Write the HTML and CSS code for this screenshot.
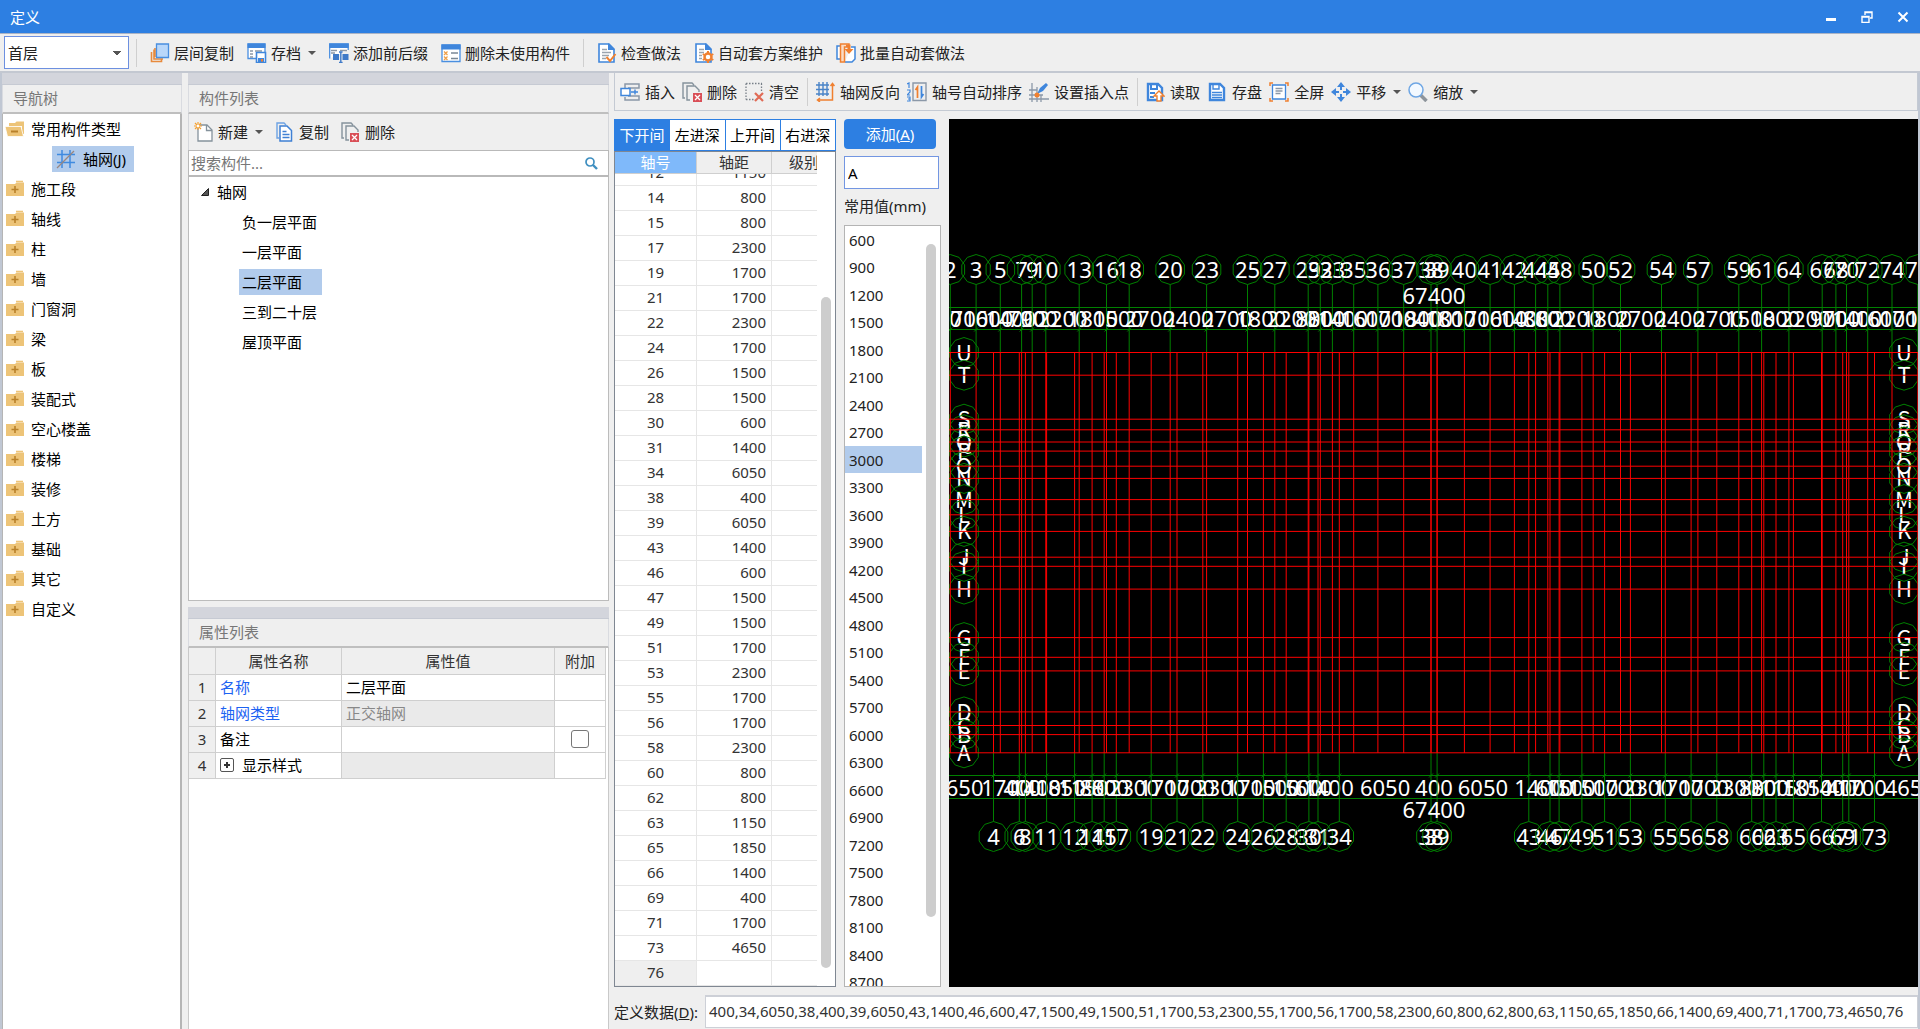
FILE: index.html
```html
<!DOCTYPE html>
<html lang="zh-CN">
<head>
<meta charset="utf-8">
<title>定义</title>
<link rel="stylesheet" href="styles.css">
</head>
<body>
<header class="titlebar">
  <h1>定义</h1>
  <div class="window-controls">
    <button type="button" aria-label="最小化"><svg viewBox="0 0 12 12"><path d="M1 8.500h10" stroke-width="3"/></svg></button>
    <button type="button" aria-label="还原"><svg viewBox="0 0 12 12"><path d="M1 5.500h7v6h-7zM4 4V1h7v6H9M1 6h7M4 1.500h7" stroke-width="1.400"/></svg></button>
    <button type="button" aria-label="关闭"><svg viewBox="0 0 12 12"><path d="M1.500 1.500l9 9M10.500 1.500l-9 9" stroke-width="2"/></svg></button>
  </div>
</header>

<div class="toolbar main-toolbar">
  <select class="floor" aria-label="楼层"><option>首层</option></select>
  <span class="sep"></span>
  <button type="button"><svg class="icon" viewBox="0 0 20 20"><path d="M5 5v9M1.500 9v9.500h10V16M4 6.500v9.500h9" fill="none" stroke="#e88a3c" stroke-width="1.600"/><path d="M6.500 1h12v13.500h-12z" fill="#b9d7fa" stroke="#4a8fe0" stroke-width="1.300"/></svg>层间复制</button>
  <button type="button"><svg class="icon" viewBox="0 0 20 20"><path d="M9 15.500H1V1h17v8" fill="#fff" stroke="#4a8fe0" stroke-width="1.300"/><path d="M.5.500h18v4.500H.5z" fill="#3f86dc"/><path d="M3 8h3M8 8h7M3 11h3M3 14h3" stroke="#8b98a8" stroke-width="1.400"/><path d="M9.500 9.500h9v10h-9z" fill="#fff" stroke="#3f86dc" stroke-width="1.600"/><path d="M11 15h6v4.500h-6z" fill="#3f86dc"/><path d="M14 16h2v2.500h-2z" fill="#f08030"/></svg>存档<i class="caret"></i></button>
  <button type="button"><svg class="icon" viewBox="0 0 20 20"><path d="M.7 15.500V1h18.500v6" fill="#fff" stroke="#4a8fe0" stroke-width="1.300"/><path d="M.3.500h19.400v4.500H.3z" fill="#3f86dc"/><path d="M2 7.500h6M11 7.500h7M2 10h4" stroke="#8b98a8" stroke-width="1.300"/><path d="M4 11h6v6H4zM13.500 11h6v6h-6z" fill="#3f7ac8"/><path d="M11.800 9.500v10M10 9h3.600M10 19.500h3.600" stroke="#3f7ac8" stroke-width="1.400"/></svg>添加前后缀</button>
  <button type="button"><svg class="icon" viewBox="0 0 20 20"><path d="M1 2h18v16.500H1z" fill="#fff" stroke="#4a8fe0" stroke-width="1.300"/><path d="M.4 1.500h19.200v5H.4z" fill="#3f86dc"/><path d="M3 8.500l3.500 3.500M6.500 8.500L3 12M3 13.500L6.500 17M6.500 13.500L3 17" stroke="#f0a04a" stroke-width="1.300"/><path d="M10 10h7M10 15.500h7" stroke="#7a8896" stroke-width="1.300"/></svg>删除未使用构件</button>
  <span class="sep"></span>
  <button type="button"><svg class="icon" viewBox="0 0 20 20"><path d="M2 1h10l5 5v13H2z" fill="#fff" stroke="#3f86dc" stroke-width="1.600"/><path d="M11 0l7 7h-7z" fill="#3f86dc"/><path d="M5 6.500h5M5 9.500h9M5 12.500h7M5 15.500h4" stroke="#9aa4af" stroke-width="1.400"/><path d="M9.500 14l3.500 4 5.500-7" fill="none" stroke="#f08030" stroke-width="2"/></svg>检查做法</button>
  <button type="button"><svg class="icon" viewBox="0 0 20 20"><path d="M2 1h10l5 5v13H2z" fill="#fff" stroke="#3f86dc" stroke-width="1.600"/><path d="M11 0l7 7h-7z" fill="#3f86dc"/><path d="M5 6.500h5M5 9.500h5M5 12.500h3M5 15.500h3" stroke="#9aa4af" stroke-width="1.400"/><circle cx="14" cy="14" r="3.500" fill="#fff" stroke="#f08030" stroke-width="2.500"/><path d="M14 8v2M14 18v2M8.800 11l1.800 1M17.500 16l1.800 1M8.800 17l1.800-1M17.500 12l1.800-1" stroke="#f08030" stroke-width="2"/></svg>自动套方案维护</button>
  <button type="button"><svg class="icon" viewBox="0 0 20 20"><path d="M4 3H1v13h3M15 4h4v12l-3 3H9" fill="#fff" stroke="#3f86dc" stroke-width="1.500"/><path d="M4.500 1H13v3H8.500v15h-4z" fill="#fbdcc4" stroke="#f08030" stroke-width="1.500"/><path d="M10 1.500h4.500V6h3l-4.500 5-4.500-5h3V4H10z" fill="#f08030"/></svg>批量自动套做法</button>
</div>

<main class="workspace">
  <nav class="panel nav-panel">
    <div class="grip"></div>
    <h2>导航树</h2>
    <ul class="nav-tree" id="nav">
      <li><a href="#"><svg class="icon" viewBox="0 0 20 20"><path d="M4 8V4h6l1.500-1.500H19V15h-2V7z" fill="#edc478"/><path d="M0 7.500h16l2.500 10h-16z" fill="#edc478" stroke="#fff" stroke-width="0.800"/><path d="M6 12.500h7" stroke="#b8812a" stroke-width="2"/></svg>常用构件类型</a></li>
      <li class="child"><a href="#" class="selected"><svg class="icon" viewBox="0 0 20 20"><path d="M6 1v18M14 1v18M1 5.500h18M1 13.500h18" stroke="#3f8ae0" stroke-width="1.500"/><path d="M1 19L18 2" stroke="#9a8680" stroke-width="1.300"/></svg>轴网(J)</a></li>
    </ul>
  </nav>

  <div class="middle">
    <section class="panel list-panel">
      <div class="grip"></div>
      <h2>构件列表</h2>
      <div class="toolbar list-toolbar">
        <button type="button"><svg class="icon" viewBox="0 0 20 20"><path d="M4 3h9l5 5v11H4z" fill="#fff" stroke="#85929c" stroke-width="1.300"/><path d="M12.500 3v5.500H18" fill="none" stroke="#85929c" stroke-width="1.300"/><path d="M0 4h8M4 0v8M1 1l6 6M7 1L1 7" stroke="#f5a030" stroke-width="1.200"/><circle cx="4" cy="4" r="1.400" fill="#fff"/></svg>新建<i class="caret"></i></button>
        <button type="button"><svg class="icon" viewBox="0 0 20 20"><path d="M4 16H2V1h7l2 2" fill="none" stroke="#6da3e4" stroke-width="1.400"/><path d="M5 4h7l4.500 4.500V19H5z" fill="#fff" stroke="#3f80d4" stroke-width="1.500"/><path d="M7.500 9.500h4M7.500 12.500h7M7.500 15.500h7" stroke="#3f80d4" stroke-width="1.500"/></svg>复制</button>
        <button type="button"><svg class="icon" viewBox="0 0 20 20"><path d="M3 16H1V1h9l2 2M8 18H5V4h8l4 4v2" fill="none" stroke="#85929c" stroke-width="1.400"/><path d="M9 11h9v9H9z" fill="#d94f57"/><path d="M11 13l5 5M16 13l-5 5" stroke="#fff" stroke-width="1.300"/></svg>删除</button>
      </div>
      <div class="search"><input type="text" aria-label="搜索构件" placeholder="搜索构件..."><svg viewBox="0 0 14 14"><circle cx="6" cy="6" r="4" fill="none" stroke="#3f8fc0" stroke-width="1.700"/><path d="M9 9l4 4" stroke="#3f8fc0" stroke-width="2.400"/></svg></div>
      <ul class="comp-tree">
        <li class="root"><svg viewBox="0 0 8 8"><path d="M7.500.500v7h-7z" fill="#555" stroke="#222"/></svg>轴网</li>
        <li><a href="#">负一层平面</a></li>
        <li><a href="#">一层平面</a></li>
        <li><a href="#" class="selected">二层平面</a></li>
        <li><a href="#">三到二十层</a></li>
        <li><a href="#">屋顶平面</a></li>
      </ul>
    </section>
    <section class="panel prop-panel">
      <div class="grip"></div>
      <h2>属性列表</h2>
      <div class="prop-body">
        <table class="props">
          <thead><tr><th class="num"></th><th class="name">属性名称</th><th>属性值</th><th class="extra">附加</th></tr></thead>
          <tbody>
            <tr><th>1</th><td class="link">名称</td><td>二层平面</td><td></td></tr>
            <tr><th>2</th><td class="link">轴网类型</td><td class="locked">正交轴网</td><td></td></tr>
            <tr><th>3</th><td><label for="note-extra">备注</label></td><td></td><td class="tick"><input type="checkbox" id="note-extra"></td></tr>
            <tr><th>4</th><td><span class="expandable"><button type="button" class="expand" aria-label="展开"></button>显示样式</span></td><td class="locked"></td><td></td></tr>
          </tbody>
        </table>
      </div>
    </section>
  </div>

  <section class="editor">
    <div class="toolbar axis-toolbar">
      <button type="button"><svg class="icon" viewBox="0 0 20 20"><path d="M5 6V2h14v4H8M5 15v3h14v-4H8" fill="none" stroke="#8b98a8" stroke-width="1.500"/><path d="M1 6.500h9v7H1z" fill="#fff" stroke="#3f86dc" stroke-width="1.500"/><path d="M11 10h7M15 7.500v5" stroke="#3f86dc" stroke-width="1.400"/></svg>插入</button>
      <button type="button"><svg class="icon" viewBox="0 0 20 20"><path d="M3 16H1V1h9l2 2M8 18H5V4h8l4 4v2" fill="none" stroke="#85929c" stroke-width="1.400"/><path d="M11 11h9v9h-9z" fill="#d94f57"/><path d="M13 13l5 5M18 13l-5 5" stroke="#fff" stroke-width="1.300"/></svg>删除</button>
      <button type="button"><svg class="icon" viewBox="0 0 20 20"><path d="M2 1.500h16M2 17.500h8M2 1.500v16M17.500 1.500V9" fill="none" stroke="#777f88" stroke-width="1.300" stroke-dasharray="1.500 1.500"/><path d="M11 11l8 8M19 11l-8 8" stroke="#e06a55" stroke-width="2.200"/></svg>清空</button>
      <span class="sep"></span>
      <button type="button"><svg class="icon" viewBox="0 0 20 20"><path d="M4 0v14M8 0v14M12 0v14M1 3h13M1 7.500h13M1 12h13" stroke="#4a84c8" stroke-width="1.400"/><path d="M17.500 2v16H3M15.500 4l2-2.500 2 2.500M5 16l-2.500 2L5 20" fill="none" stroke="#f08030" stroke-width="1.500"/></svg>轴网反向</button>
      <button type="button"><svg class="icon" viewBox="0 0 20 20"><path d="M0 2l2-1v5M0 8h3v2L0 13h3M0 15h3v4H0M1 17h2" fill="none" stroke="#3f86dc" stroke-width="1.200"/><path d="M6 1h13v17.500H6z" fill="none" stroke="#8b98a8" stroke-width="1.400"/><path d="M10.500 16V5l-2 3" fill="none" stroke="#f08030" stroke-width="1.700"/><path d="M14.500 4v11l2-3" fill="none" stroke="#3f86dc" stroke-width="1.700"/></svg>轴号自动排序</button>
      <button type="button"><svg class="icon" viewBox="0 0 20 20"><path d="M3 1v19M8 5v15M0 8h8M0 17h20M12 13v7M0 13h14" stroke="#8b98a8" stroke-width="1.300"/><path d="M8 12l3-6 6-5 2 2-5 6z" fill="#3f86dc"/><circle cx="8" cy="13" r="2.500" fill="#f08030"/></svg>设置插入点</button>
      <span class="sep"></span>
      <button type="button"><svg class="icon" viewBox="0 0 20 20"><path d="M3 2h10l4 4v12H3z" fill="#fff" stroke="#3f86dc" stroke-width="2.400"/><path d="M6 2v5h6V2M5 11h5M5 15h4" fill="none" stroke="#3f86dc" stroke-width="2"/><path d="M14 9l5 5h-3v5h-4v-5h-3z" fill="#fff" stroke="#f08030" stroke-width="1.400"/></svg>读取</button>
      <button type="button"><svg class="icon" viewBox="0 0 20 20"><path d="M3 2h10l4 4v12H3z" fill="#fff" stroke="#3f86dc" stroke-width="2.400"/><path d="M6 2v5h6V2M5 10.500h10M5 13h10M5 15.500h10" fill="none" stroke="#3f86dc" stroke-width="1.400"/></svg>存盘</button>
      <button type="button"><svg class="icon" viewBox="0 0 20 20"><path d="M1 4V1h3M16 1h3v3M19 16v3h-3M4 19H1v-3" fill="none" stroke="#f08030" stroke-width="1.500"/><path d="M3.500 3h13v14h-13z" fill="#fff" stroke="#3f86dc" stroke-width="1.300"/><path d="M6.500 6.500h7M6.500 9h7M6.500 11.500h5" stroke="#8b98a8" stroke-width="1.300"/></svg>全屏</button>
      <button type="button"><svg class="icon" viewBox="0 0 20 20"><path d="M10 0l4 5h-3v3H9V5H6zM10 20l4-5h-3v-3H9v3H6zM0 10l5-4v3h3v2H5v3zM20 10l-5-4v3h-3v2h3v3z" fill="#3f86dc"/></svg>平移<i class="caret"></i></button>
      <button type="button"><svg class="icon" viewBox="0 0 20 20"><path d="M12.500 13l6 6" stroke="#8d949b" stroke-width="3.500"/><circle cx="8" cy="8" r="7" fill="#f3f9ff" stroke="#6ea6e4" stroke-width="1.500"/></svg>缩放<i class="caret"></i></button>
    </div>

    <div class="panes">
      <div class="axis-pane">
        <div class="tabs" role="tablist">
          <button type="button" role="tab" aria-selected="true">下开间</button>
          <button type="button" role="tab" aria-selected="false">左进深</button>
          <button type="button" role="tab" aria-selected="false">上开间</button>
          <button type="button" role="tab" aria-selected="false">右进深</button>
        </div>
        <div class="axis-box">
          <div class="axis-scroll" id="axis-scroll">
            <table class="axes">
              <thead><tr><th class="no">轴号</th><th class="dist">轴距</th><th class="level">级别</th></tr></thead>
              <tbody id="axis-rows"></tbody>
            </table>
          </div>
          <div class="track"><div class="thumb axis-thumb"></div></div>
        </div>
      </div>

      <div class="value-pane">
        <button type="button" class="add">添加(<u>A</u>)</button>
        <input type="text" class="value" aria-label="值" value="A" id="value">
        <h3>常用值(mm)</h3>
        <div class="value-box">
          <ul id="values"></ul>
          <div class="track"><div class="thumb value-thumb"></div></div>
        </div>
      </div>

      <div class="canvas">
        <svg id="plan" viewBox="0 0 969 869" preserveAspectRatio="xMidYMid slice" role="img" aria-label="轴网"></svg>
      </div>
    </div>

    <div class="data-bar">
      <label for="data">定义数据(<u>D</u>):</label>
      <input type="text" id="data" value="400,34,6050,38,400,39,6050,43,1400,46,600,47,1500,49,1500,51,1700,53,2300,55,1700,56,1700,58,2300,60,800,62,800,63,1150,65,1850,66,1400,69,400,71,1700,73,4650,76">
    </div>
  </section>
</main>
<script src="script.js"></script>
</body>
</html>
```
FILE: styles.css
```css
* { box-sizing: border-box; }

body {
  margin: 0;
  height: 100vh;
  display: flex;
  flex-direction: column;
  overflow: hidden;
  background: #efefef;
  color: #000;
  font: 15px/20px "Noto Sans", "Noto Sans CJK SC", sans-serif;
}

h1, h2, h3, ul { margin: 0; padding: 0; font-size: 15px; font-weight: 400; }
ul { list-style: none; }
a { color: inherit; text-decoration: none; }
button, input, select { font: inherit; color: inherit; }
button { margin: 0; padding: 0; border: 0; background: none; white-space: nowrap; }

.titlebar {
  display: flex;
  flex: none;
  align-items: center;
  justify-content: space-between;
  height: 34px;
  padding: 0 5px 0 10px;
  border-bottom: 1px solid #aab4c6;
  background: #2d7fe2;
  color: #fff;
}
.window-controls { display: flex; gap: 12px; }
.window-controls button { width: 24px; height: 24px; display: grid; place-items: center; }
.window-controls svg { width: 12px; height: 12px; fill: none; stroke: #fff; }

.toolbar { display: flex; flex: none; align-items: center; color: #222; overflow: hidden; }
.toolbar button { display: flex; flex: none; align-items: center; gap: 4px; }
.icon { width: 20px; height: 20px; flex: none; }
.caret {
  margin-left: 3px;
  border: 4px solid transparent;
  border-top-color: #555;
  border-bottom: 0;
}
.sep { width: 1px; height: 28px; flex: none; background: #cfcfcf; }

.main-toolbar {
  gap: 13px;
  height: 39px;
  padding: 0 4px;
  border-bottom: 2px solid #c3c8d1;
}
.floor {
  width: 125px;
  height: 33px;
  margin-right: -6px;
  padding: 0 3px;
  border: 1px solid #6d90e0;
  border-radius: 0;
  appearance: none;
  background:
    linear-gradient(45deg, transparent 50%, #555 50%) right 11px center / 4px 4px no-repeat,
    linear-gradient(-45deg, transparent 50%, #555 50%) right 7px center / 4px 4px no-repeat,
    #fff;
}

.workspace {
  display: grid;
  grid-template-columns: 180px 432px minmax(0, 1fr);
  grid-template-rows: minmax(0, 1fr);
  flex: 1;
  min-height: 0;
  border: solid #c0c7d3;
  border-width: 0 2px;
}

.panel { display: flex; flex-direction: column; min-height: 0; }
.grip { height: 12px; flex: none; background: #d3d5dc; border-bottom: 1px solid #c6cad3; }
.panel h2 {
  height: 29px;
  flex: none;
  padding: 3px 10px;
  border: 1px solid #d9dbe0;
  border-width: 0 1px 2px;
  border-bottom-color: #bfbfbf;
  color: #777;
}

.nav-tree {
  flex: 1;
  min-height: 0;
  overflow: hidden;
  border: solid #b5b5b5;
  border-width: 0 2px 0 1px;
  background: #fff;
}
.nav-tree li { display: flex; align-items: center; height: 30px; padding-left: 2px; }
.nav-tree a { display: flex; align-items: center; gap: 6px; height: 26px; }
.nav-tree .child { padding-left: 49px; }
.nav-tree .child a { gap: 7px; padding: 0 8px 0 4px; }
.selected { background: #b1cbec; }

.middle { display: flex; flex-direction: column; gap: 6px; min-height: 0; padding: 0 5px 0 6px; }
.list-panel { flex: 5; }
.prop-panel { flex: 4; }
.list-toolbar { gap: 12px; height: 36px; padding-left: 5px; border: 1px solid #d4d6da; border-width: 0 1px; }

.search {
  display: flex;
  flex: none;
  align-items: center;
  height: 27px;
  padding: 0 10px 0 2px;
  border: 1px solid #b9b9b9;
  border-bottom-width: 2px;
  background: #fff;
}
.search input { flex: 1; min-width: 0; padding: 0; border: 0; outline: 0; background: none; }
.search input::placeholder { color: #777; }
.search svg { width: 14px; height: 14px; }

.comp-tree {
  flex: 1;
  min-height: 0;
  overflow: hidden;
  border: solid #bcbcbc;
  border-width: 0 1px 1px;
  background: #fff;
}
.comp-tree li { display: flex; align-items: center; height: 30px; padding-left: 50px; }
.comp-tree .root { gap: 8px; padding-left: 12px; }
.comp-tree svg { width: 8px; height: 8px; }
.comp-tree a { padding: 3px; }
.comp-tree .selected { padding-right: 20px; }

.prop-body {
  flex: 1;
  min-height: 0;
  padding-right: 2px;
  border: solid #c9c9c9;
  border-width: 0 1px;
  background: #fff;
}
.props { width: 100%; table-layout: fixed; border-collapse: separate; border-spacing: 0; }
.props th, .props td {
  height: 26px;
  padding: 0 4px;
  border: solid #cfcfcf;
  border-width: 0 1px 1px 0;
  text-align: left;
}
.props th { padding: 0; background: #efefef; color: #333; font-weight: 400; text-align: center; }
.props thead th { height: 27px; }
.props .num { width: 27px; }
.props .name { width: 126px; }
.props .extra { width: 51px; }
.props .link { color: #1c62f2; }
.props .locked { background: #eaeaea; color: #888; }
.props .tick { padding: 0; text-align: center; }
.tick input {
  display: block;
  width: 18px;
  height: 18px;
  margin: 0 auto;
  border: 1px solid #777;
  border-radius: 3px;
  appearance: none;
  background: #fff;
}
.expandable { display: flex; align-items: center; gap: 8px; }
.expand {
  width: 14px;
  height: 14px;
  border: 1px solid #555;
  border-radius: 2px;
  background:
    linear-gradient(#333, #333) center / 6px 2px no-repeat,
    linear-gradient(#333, #333) center / 2px 6px no-repeat;
}

.editor { display: flex; flex-direction: column; min-width: 0; min-height: 0; }
.axis-toolbar {
  gap: 7px;
  height: 38px;
  padding-left: 5px;
  border: 1px solid #c4cad3;
  border-top: 0;
}
.axis-toolbar button { gap: 5px; }
.axis-toolbar .caret { margin-left: 2px; }
.axis-toolbar .sep { margin-left: 1px; }

.panes { display: flex; flex: 1; gap: 8px; min-height: 0; margin: 8px 0; }
.axis-pane { display: flex; flex-direction: column; width: 222px; flex: none; }
.tabs { display: flex; height: 32px; flex: none; border: 1px solid #2d7fe2; }
.tabs button { flex: 1; border-left: 1px solid #2d7fe2; background: #fff; color: #000; }
.tabs button:first-child { border-left: 0; }
.tabs [aria-selected="true"] { background: #2d7fe2; color: #fff; }

.axis-box {
  display: flex;
  flex: 1;
  min-height: 0;
  border: 1px solid #7f8792;
  background: #fff;
}
.axis-scroll { flex: 1; min-width: 0; overflow: hidden; }
.track { position: relative; width: 18px; flex: none; }
.thumb { position: absolute; border-radius: 5px; background: #cdcdcd; }
.axis-thumb { top: 145px; right: 4px; bottom: 18px; width: 10px; }
.axes { width: 100%; table-layout: fixed; border-collapse: separate; border-spacing: 0; }
.axes th {
  position: sticky;
  top: 0;
  height: 22px;
  padding: 0;
  border: solid #cfcfcf;
  border-width: 0 1px 1px 0;
  background: #efefef;
  color: #333;
  font-weight: 400;
  line-height: 21px;
}
.axes .no { width: 82px; background: #7fb9fa; color: #fff; }
.axes .dist { width: 75px; }
.axes .level { padding-left: 17px; overflow: hidden; white-space: nowrap; text-align: left; border-right: 0; }
.axes td {
  height: 25px;
  padding: 0 5px 2px;
  border: solid #e6e6e6;
  border-width: 0 1px 1px 0;
  color: #333;
  text-align: right;
}
.axes td:first-child { text-align: center; }
.axes td:last-child { border-right: 0; }
.axes tr:last-child td:first-child { background: #efefef; }

.value-pane { display: flex; flex-direction: column; align-items: flex-start; width: 97px; flex: none; }
.add { width: 92px; height: 30px; flex: none; border-radius: 4px; background: #2d7fe2; color: #fff; }
.value {
  width: 95px;
  height: 33px;
  flex: none;
  margin: 7px 0;
  padding: 0 3px;
  border: 1px solid #7396e2;
  outline: 0;
  background: #fff;
}
.value-pane h3 { height: 29px; color: #222; white-space: nowrap; }
.value-box {
  display: flex;
  flex: 1;
  align-self: stretch;
  min-height: 0;
  border: 1px solid #b4b4b4;
  background: #fff;
}
.value-box ul { flex: 1; overflow: hidden; }
.value-box li { height: 27px; padding: 4px; color: #222; }
.value-box li:nth-child(even) { height: 28px; }
.value-thumb { top: 18px; right: 4px; bottom: 69px; width: 10px; }

.canvas { flex: 1; min-width: 0; background: #000; }
.canvas svg { display: block; width: 100%; height: 100%; }
.grid-line { fill: none; stroke: #f00; }
.lead { fill: none; stroke: #008000; }
.plan-text { fill: #fff; font-size: 22px; text-anchor: middle; }
.plan-letter { font-family: "Noto Sans CJK SC", sans-serif; }

.data-bar { display: flex; flex: none; align-items: center; gap: 7px; height: 33px; margin-bottom: 1px; }
.data-bar label { flex: none; color: #222; }
.data-bar input {
  flex: 1;
  min-width: 0;
  height: 33px;
  padding: 0 3px 2px;
  border: 1px solid #cdd0d7;
  border-top-width: 2px;
  outline: 0;
  background: #fff;
  color: #333;
}
```
FILE: script.js
```js
// Navigation tree
const folder = '<svg class="icon" viewBox="0 0 20 20"><path d="M11 2.500h7" stroke="#edc478" stroke-width="1.600"/><path d="M1 5h9l1.500-1.500H19V17H1z" fill="#edc478"/><path d="M6.500 10.500h7M10 7v7" stroke="#b8812a" stroke-width="1.600"/></svg>';
const nav = document.getElementById('nav');
['施工段', '轴线', '柱', '墙', '门窗洞', '梁', '板', '装配式', '空心楼盖', '楼梯', '装修', '土方', '基础', '其它', '自定义'].forEach(name => {
  nav.insertAdjacentHTML('beforeend', `<li><a href="#">${folder}${name}</a></li>`);
});

// Axes as [name, distance to the next axis in mm]
const bottomAxes = [[1, 4650], [4, 1700], [6, 400], [8, 1400], [11, 1850], [12, 1150], [14, 800], [15, 800], [17, 2300], [19, 1700], [21, 1700], [22, 2300], [24, 1700], [26, 1500], [28, 1500], [30, 600], [31, 1400], [34, 6050], [38, 400], [39, 6050], [43, 1400], [46, 600], [47, 1500], [49, 1500], [51, 1700], [53, 2300], [55, 1700], [56, 1700], [58, 2300], [60, 800], [62, 800], [63, 1150], [65, 1850], [66, 1400], [69, 400], [71, 1700], [73, 4650], [76, '']];
const topAxes = [[1, 1800], [2, 1700], [3, 1600], [5, 1400], [7, 700], [9, 900], [10, 2200], [13, 1800], [16, 1500], [18, 2700], [20, 2400], [23, 2700], [25, 1800], [27, 2200], [29, 800], [32, 800], [33, 1400], [35, 1600], [36, 1700], [37, 1800], [38, 400], [39, 1800], [40, 1700], [41, 1600], [42, 1400], [44, 800], [45, 800], [48, 2200], [50, 1800], [52, 2700], [54, 2400], [57, 2700], [59, 1500], [61, 1800], [64, 2200], [67, 900], [68, 700], [70, 1400], [72, 1600], [74, 1700], [75, 1800], [76, '']];
const sideAxes = [['U', 1500], ['T', 2900], ['S', 700], ['R', 800], ['Q', 600], ['P', 1000], ['O', 800], ['N', 1400], ['M', 1000], ['L', 1100], ['K', 1700], ['J', 600], ['I', 1500], ['H', 3200], ['G', 1300], ['F', 900], ['E', 2700], ['D', 900], ['C', 600], ['B', 1200], ['A', '']];

document.getElementById('axis-rows').innerHTML = bottomAxes
  .map(([name, d]) => `<tr><td>${name}</td><td>${d}</td><td></td></tr>`).join('');
const scroller = document.getElementById('axis-scroll');
scroller.scrollTop = scroller.scrollHeight;

// Common spacings
let items = '';
for (let v = 600; v <= 9000; v += 300) {
  items += `<li${v === 3000 ? ' class="selected"' : ''}>${v}</li>`;
}
document.getElementById('values').innerHTML = items;

// Axis grid drawing
const scale = 0.015164;
const left = -26, top0 = 234;
const place = (axes, start) => {
  let at = 0;
  return axes.map(([name, d]) => {
    const item = { name, d, pos: start + at * scale, mid: start + (at + d / 2) * scale };
    at += +d;
    return item;
  });
};
const topRow = place(topAxes, left);
const bottomRow = place(bottomAxes, left);
const side = place(sideAxes, top0);
const right = left + 67400 * scale;
const bottom = side[side.length - 1].pos;

const f = n => n.toFixed(1);
const line = (cls, x1, y1, x2, y2) => `<path class="${cls}" d="M${f(x1)} ${f(y1)}L${f(x2)} ${f(y2)}"/>`;
const text = (x, y, s) => `<text class="plan-text${isNaN(s) ? ' plan-letter' : ''}" x="${f(x)}" y="${f(y + 8)}">${s}</text>`;
const bubble = (x, y, s) => {
  const pts = [];
  for (let i = 0; i < 10; i++) {
    const a = Math.PI * i / 5;
    pts.push(f(x + 15 * Math.sin(a)) + ',' + f(y - 15 * Math.cos(a)));
  }
  return `<polygon class="lead" points="${pts.join(' ')}"/>` + text(x, y, s);
};

let out = '';
[189, 211, 657, 680].forEach(y => { out += line('lead', left, y, right, y); });
topRow.forEach(a => {
  out += line('lead', a.pos, 166, a.pos, top0) + line('lead', a.pos - 2, 213, a.pos + 2, 209);
  out += bubble(a.pos, 151, a.name);
  if (a.d) out += text(a.mid, 200, a.d);
});
bottomRow.forEach(a => {
  out += line('lead', a.pos, bottom, a.pos, 703) + line('lead', a.pos - 2, 659, a.pos + 2, 655);
  out += bubble(a.pos, 718, a.name);
  if (a.d) out += text(a.mid, 669, a.d);
});
out += text((left + right) / 2, 177, 67400) + text((left + right) / 2, 691, 67400);
side.forEach(a => { out += bubble(15, a.pos, a.name) + bubble(955, a.pos, a.name); });
[...topRow, ...bottomRow].forEach(a => { out += line('grid-line', a.pos, top0, a.pos, bottom); });
side.forEach(a => { out += line('grid-line', left, a.pos, right, a.pos); });
document.getElementById('plan').innerHTML = out;

const value = document.getElementById('value');
value.focus();
value.setSelectionRange(1, 1);
```
